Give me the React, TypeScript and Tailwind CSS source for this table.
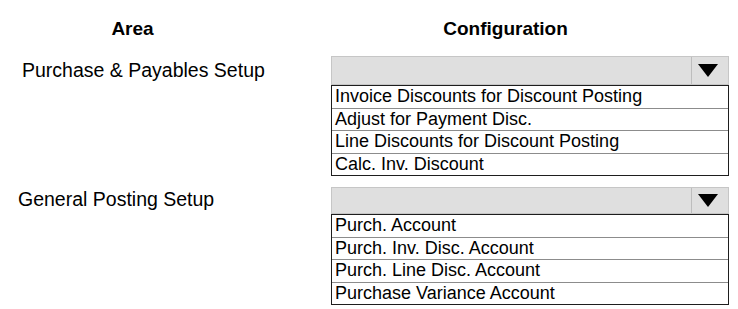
import React from "react";

type SectionProps = {
  label: string;
  labelPad: string;
  items: string[];
  topClass: string;
  dropH: string;
  labelLeading: string;
};

function Triangle() {
  return (
    <svg width="20" height="13" viewBox="0 0 20 13" className="block">
      <polygon points="0,0 20,0 10,13" fill="#000" />
    </svg>
  );
}

function Section({ label, labelPad, items, topClass, dropH, labelLeading }: SectionProps) {
  return (
    <div className={`flex ${topClass}`}>
      <div className={`w-[331px] shrink-0 ${labelPad}`}>
        <div className={`text-[19.5px] ${labelLeading} whitespace-nowrap`}>{label}</div>
      </div>
      <div className="w-[398px] shrink-0 flex flex-col">
        <div className={`flex ${dropH} border border-[#c6c6c6] bg-[#dfdfdf]`}>
          <div className="flex-1" />
          <div className="w-[37px] border-l border-[#bdbdbd] flex items-center justify-center pr-[4px]">
            <Triangle />
          </div>
        </div>
        <div className="border border-[#1e1e1e]">
          {items.map((t, i) => (
            <div
              key={t}
              className={`px-[3px] text-[18px] leading-[21.5px] whitespace-nowrap ${
                i > 0 ? "border-t border-[#8c8c8c]" : ""
              }`}
            >
              {t}
            </div>
          ))}
        </div>
      </div>
    </div>
  );
}

export default function App() {
  return (
    <div className="relative w-[738px] h-[309px] overflow-hidden bg-white text-black font-['Liberation_Sans',Arial,sans-serif]">
      <div className="flex pt-[18px]">
        <div className="w-[265px] text-center text-[19px] font-bold leading-[22px]">Area</div>
        <div className="ml-[65px] w-[351px] text-center text-[19px] font-bold leading-[22px]">
          Configuration
        </div>
      </div>
      <Section
        label="Purchase & Payables Setup"
        labelPad="pl-[22px]"
        topClass="mt-[16px]"
        dropH="h-[29px]"
        labelLeading="leading-[29px]"
        items={[
          "Invoice Discounts for Discount Posting",
          "Adjust for Payment Disc.",
          "Line Discounts for Discount Posting",
          "Calc. Inv. Discount",
        ]}
      />
      <Section
        label="General Posting Setup"
        labelPad="pl-[18px]"
        topClass="mt-[11px]"
        dropH="h-[27px]"
        labelLeading="leading-[24px]"
        items={[
          "Purch. Account",
          "Purch. Inv. Disc. Account",
          "Purch. Line Disc. Account",
          "Purchase Variance Account",
        ]}
      />
    </div>
  );
}
